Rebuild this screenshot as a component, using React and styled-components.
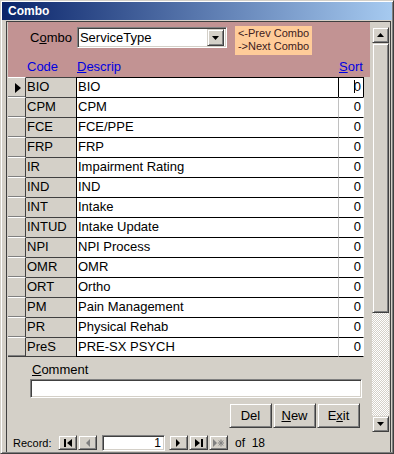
import styled, { createGlobalStyle } from "styled-components";

const records = [
  ["BIO", "BIO"],
  ["CPM", "CPM"],
  ["FCE", "FCE/PPE"],
  ["FRP", "FRP"],
  ["IR", "Impairment Rating"],
  ["IND", "IND"],
  ["INT", "Intake"],
  ["INTUD", "Intake Update"],
  ["NPI", "NPI Process"],
  ["OMR", "OMR"],
  ["ORT", "Ortho"],
  ["PM", "Pain Management"],
  ["PR", "Physical Rehab"],
  ["PreS", "PRE-SX PSYCH"],
];

const App = () => {
  return (
    <>
      <GlobalStyle />
      <Window>
        <TitleBar>Combo</TitleBar>
        <Client>
          <Upper>
            <Form>
              <Header>
                <TopRow>
                  <Label>C<u>o</u>mbo</Label>
                  <Select>
                    <span>ServiceType</span>
                    <DropButton>
                      <svg width="7" height="4" viewBox="0 0 7 4">
                        <path d="M0 0h7L3.5 4z" fill="#000" />
                      </svg>
                    </DropButton>
                  </Select>
                  <HintBox>
                    <div>&lt;-Prev Combo</div>
                    <div>-&gt;Next Combo</div>
                  </HintBox>
                </TopRow>
                <ColumnRow>
                  <span />
                  <ColumnTitle>Code</ColumnTitle>
                  <ColumnTitle><u>D</u>escrip</ColumnTitle>
                  <ColumnTitle $right><u>S</u>ort</ColumnTitle>
                </ColumnRow>
              </Header>

              <Rows>
                {records.map(([code, descrip], i) => (
                  <Row key={code}>
                    <Selector $last={i === records.length - 1}>
                      {i === 0 && <Pointer />}
                    </Selector>
                    <CodeCell $last={i === records.length - 1}>{code}</CodeCell>
                    <DescCell $last={i === records.length - 1}>{descrip}</DescCell>
                    <SortCell $last={i === records.length - 1} $focused={i === 0}>
                      {i === 0 && <Caret />}0
                    </SortCell>
                  </Row>
                ))}
              </Rows>

              <Footer>
                <Label><u>C</u>omment</Label>
                <CommentBox />
                <Buttons>
                  <Button>Del</Button>
                  <Button><u>N</u>ew</Button>
                  <Button>E<u>x</u>it</Button>
                </Buttons>
              </Footer>
            </Form>

            <ScrollColumn>
              <ScrollBar>
                <ArrowButton>
                  <svg width="7" height="4" viewBox="0 0 7 4">
                    <path d="M0 4h7L3.5 0z" fill="#000" />
                  </svg>
                </ArrowButton>
                <Thumb />
                <Track />
                <ArrowButton>
                  <svg width="7" height="4" viewBox="0 0 7 4">
                    <path d="M0 0h7L3.5 4z" fill="#000" />
                  </svg>
                </ArrowButton>
              </ScrollBar>
            </ScrollColumn>
          </Upper>

          <RecordBar>
            <RecordLabel>Record:</RecordLabel>
            <NavGroup>
              <NavButton>
                <svg width="8" height="8" viewBox="0 0 8 8">
                  <rect x="0" y="0" width="2" height="8" fill="#000" />
                  <path d="M8 0v8L3 4z" fill="#000" />
                </svg>
              </NavButton>
              <NavButton>
                <svg width="5" height="8" viewBox="0 0 5 8">
                  <path d="M5 0v8L1 4z" fill="#808080" />
                </svg>
              </NavButton>
            </NavGroup>
            <RecordNumber>1</RecordNumber>
            <NavGroup>
              <NavButton>
                <svg width="5" height="8" viewBox="0 0 5 8">
                  <path d="M0 0v8l4-4z" fill="#000" />
                </svg>
              </NavButton>
              <NavButton>
                <svg width="8" height="8" viewBox="0 0 8 8">
                  <path d="M0 0v8l5-4z" fill="#000" />
                  <rect x="6" y="0" width="2" height="8" fill="#000" />
                </svg>
              </NavButton>
              <NavButton>
                <svg width="11" height="8" viewBox="0 0 11 8">
                  <path d="M0 0v8l4-4z" fill="#808080" />
                  <path d="M8 0.5v7M4.8 4h6.4M5.8 1.5l4.4 5M10.2 1.5l-4.4 5" stroke="#808080" strokeWidth="1" />
                </svg>
              </NavButton>
            </NavGroup>
            <OfText>of&nbsp; 18</OfText>
          </RecordBar>
        </Client>
      </Window>
    </>
  );
};

const GlobalStyle = createGlobalStyle`
  html, body {
    margin: 0;
    padding: 0;
    background: #d4d0c8;
  }
  body {
    font-family: "Liberation Sans", Arial, sans-serif;
    font-size: 13px;
    color: #000;
  }
  * {
    box-sizing: border-box;
  }
`;

const Window = styled.div`
  width: 394px;
  height: 454px;
  background: #d4d0c8;
  border: 1px solid;
  border-color: #d4d0c8 #404040 #404040 #d4d0c8;
  box-shadow: inset 1px 1px #fff, inset -1px -1px #808080;
  padding: 1px;
  display: flex;
  flex-direction: column;
`;

const TitleBar = styled.div`
  height: 18px;
  background: linear-gradient(to right, #0a246a, #a6caf0);
  color: #fff;
  font-weight: 700;
  font-size: 12px;
  line-height: 18px;
  padding-left: 6px;
`;

const Client = styled.div`
  flex: 1;
  margin: 1px 1px 0 4px;
  border: 1px solid #404040;
  border-bottom: none;
  padding-left: 1px;
  display: flex;
  flex-direction: column;
`;

const Upper = styled.div`
  height: 411px;
  display: flex;
  gap: 2px;
`;

const Form = styled.div`
  width: 362px;
  display: flex;
  flex-direction: column;
`;

const Header = styled.div`
  height: 55px;
  background: #c29393;
  display: flex;
  flex-direction: column;
`;

const TopRow = styled.div`
  display: flex;
  align-items: flex-start;
  padding: 4px 0 0 22px;
  height: 34px;
`;

const Label = styled.div`
  font-size: 13px;
  line-height: 21px;
  margin-top: 1px;
  margin-right: 5px;
`;

const sunken = `
  border: 1px solid;
  border-color: #808080 #fff #fff #808080;
  box-shadow: inset 1px 1px #404040, inset -1px -1px #d4d0c8;
`;

const raised = `
  border: 1px solid;
  border-color: #d4d0c8 #404040 #404040 #d4d0c8;
  box-shadow: inset 1px 1px #fff, inset -1px -1px #808080;
  background: #d4d0c8;
`;

const Select = styled.div`
  ${sunken}
  width: 150px;
  height: 21px;
  margin-top: 1px;
  background: #fff;
  display: flex;
  align-items: center;
  justify-content: space-between;
  padding: 0 2px 0 2px;

  span {
    line-height: 17px;
  }
`;

const DropButton = styled.div`
  ${raised}
  width: 17px;
  height: 17px;
  display: flex;
  align-items: center;
  justify-content: center;
`;

const HintBox = styled.div`
  width: 77px;
  height: 29px;
  margin-left: 8px;
  background: #ffcc99;
  color: #402020;
  font-size: 11px;
  line-height: 13px;
  padding: 1px 0 0 3px;
`;

const grid = `
  display: grid;
  grid-template-columns: 18px 50px 262px 26px;
`;

const ColumnRow = styled.div`
  ${grid}
  align-items: center;
  height: 21px;
`;

const ColumnTitle = styled.div`
  color: #0000e0;
  padding-left: 1px;
  text-align: ${(p) => (p.$right ? "right" : "left")};
  padding-right: ${(p) => (p.$right ? "2px" : "0")};
`;

const Rows = styled.div`
  display: flex;
  flex-direction: column;
`;

const Row = styled.div`
  ${grid}
  height: 20px;
  line-height: 18px;
`;

const Selector = styled.div`
  background: #d4d0c8;
  border-top: 1px solid #fff;
  border-right: 1px solid #404040;
  border-bottom: ${(p) => (p.$last ? "1px solid #404040" : "none")};
  box-shadow: inset 0 -1px #808080;
  display: flex;
  align-items: center;
  justify-content: center;
`;

const Pointer = styled.div`
  width: 0;
  height: 0;
  border-left: 6px solid #000;
  border-top: 5px solid transparent;
  border-bottom: 5px solid transparent;
  margin-left: 2px;
`;

const CodeCell = styled.div`
  background: #d4d0c8;
  border-top: 1px solid #404040;
  border-bottom: ${(p) => (p.$last ? "1px solid #404040" : "none")};
  padding-left: 1px;
  white-space: nowrap;
`;

const DescCell = styled.div`
  background: #fff;
  border-top: 1px solid #000;
  border-left: 1px solid #000;
  border-bottom: ${(p) => (p.$last ? "1px solid #000" : "none")};
  padding-left: 1px;
  white-space: nowrap;
`;

const SortCell = styled.div`
  background: #fff;
  border-top: 1px solid #000;
  border-left: 1px solid ${(p) => (p.$focused ? "#000" : "#c0c0c0")};
  border-right: 1px solid ${(p) => (p.$focused ? "#000" : "transparent")};
  border-bottom: ${(p) => (p.$last ? "1px solid #000" : "none")};
  text-align: right;
  padding-right: 2px;
`;

const Caret = styled.span`
  display: inline-block;
  width: 1px;
  height: 13px;
  background: #000;
  vertical-align: -2px;
  margin-right: -1px;
`;

const Footer = styled.div`
  flex: 1;
  display: flex;
  flex-direction: column;
  padding: 5px 8px 0 22px;

  ${Label} {
    line-height: 15px;
    margin: 0 0 0 2px;
  }
`;

const CommentBox = styled.div`
  ${sunken}
  background: #fff;
  height: 19px;
  margin-top: 2px;
`;

const Buttons = styled.div`
  display: flex;
  justify-content: flex-end;
  gap: 1px;
  margin-top: 5px;
  padding-right: 2px;
`;

const Button = styled.div`
  ${raised}
  width: 43px;
  height: 25px;
  display: flex;
  align-items: center;
  justify-content: center;
  font-size: 13px;
`;

const ScrollColumn = styled.div`
  width: 17px;
  padding-top: 5px;
`;

const ScrollBar = styled.div`
  height: 405px;
  display: flex;
  flex-direction: column;
`;

const ArrowButton = styled.div`
  ${raised}
  height: 16px;
  display: flex;
  align-items: center;
  justify-content: center;
`;

const Thumb = styled.div`
  ${raised}
  height: 270px;
`;

const Track = styled.div`
  flex: 1;
  background: repeating-conic-gradient(#fff 0 25%, #d4d0c8 0 50%) 0 0 / 2px 2px;
`;

const RecordBar = styled.div`
  flex: 1;
  display: flex;
  align-items: center;
  padding-left: 5px;
  font-size: 11px;
`;

const RecordLabel = styled.span`
  width: 45px;
`;

const NavGroup = styled.div`
  display: flex;
  gap: 1px;
`;

const NavButton = styled.div`
  ${raised}
  width: 19px;
  height: 15px;
  display: flex;
  align-items: center;
  justify-content: center;
`;

const RecordNumber = styled.div`
  ${sunken}
  width: 63px;
  height: 16px;
  margin: 0 4px 0 5px;
  background: #fff;
  text-align: right;
  padding-right: 3px;
  font-size: 12px;
  line-height: 14px;
`;

const OfText = styled.span`
  margin-left: 7px;
  font-size: 12px;
`;

export default App;
